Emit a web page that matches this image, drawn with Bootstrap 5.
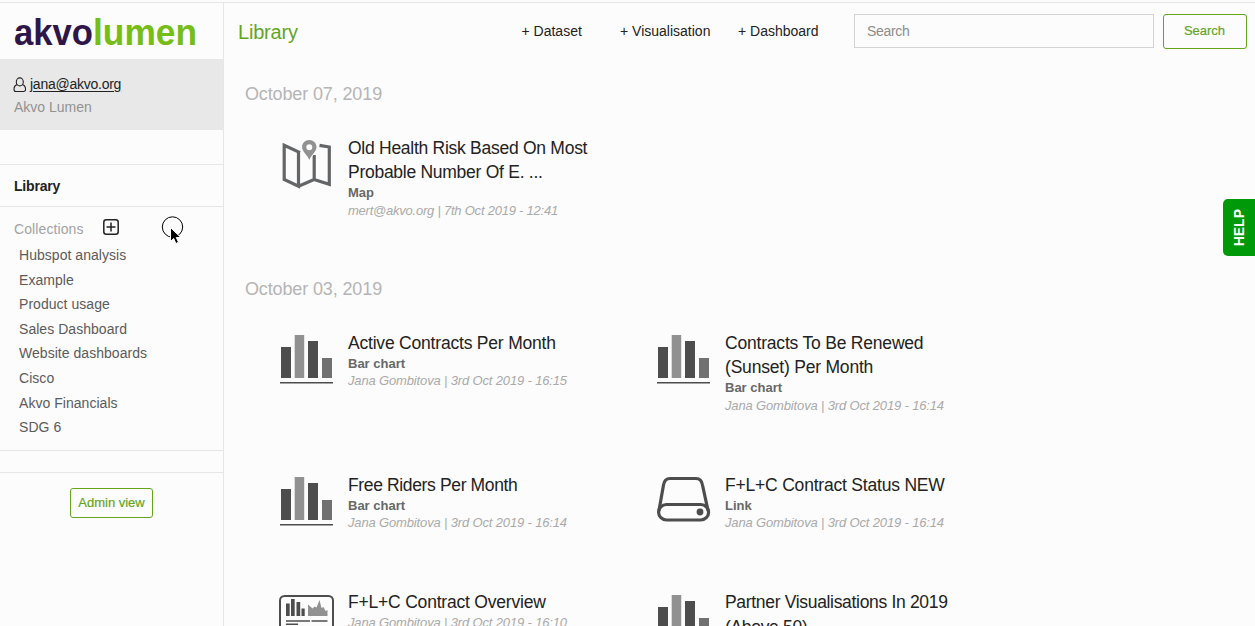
<!DOCTYPE html>
<html lang="en">
<head>
<meta charset="utf-8">
<meta name="viewport" content="width=device-width, initial-scale=1">
<title>Akvo Lumen – Library</title>
<link href="https://cdn.jsdelivr.net/npm/bootstrap@5.3.0/dist/css/bootstrap.min.css" rel="stylesheet">
<style>
:root{--line:#e6e6e6;--green:#64a51e}
body{font-family:"Liberation Sans",Arial,sans-serif;font-size:14px;line-height:20px;background:#fcfcfc;color:#222;height:624px;overflow:hidden;border-top:1px solid var(--line);margin-top:2px}
.app{height:623px;overflow:hidden}
.side{width:224px;border-right:1px solid var(--line)}
.brand{height:56px;padding:0 0 0 14px}
.profile{height:71px;background:#e8e8e8;padding:14px 14px 0;line-height:23px}
.profile a{color:#222;text-underline-offset:2px;letter-spacing:-.25px}
.muted{color:#929292}
.lib{margin-top:34px;height:43px;border-top:1px solid var(--line);border-bottom:1px solid var(--line);padding:1px 14px 0;font-weight:700}
.collections{height:244px;border-bottom:1px solid var(--line);padding:7px 14px 0}
.collections .head{height:29px;color:#a3a3a3;padding-bottom:3px;letter-spacing:.1px}
.collections .head span{width:89px;padding-top:3px}
.collections li{height:24.6px;line-height:24.6px;padding-left:5px;color:#5b5b5b;white-space:nowrap;letter-spacing:.04px}
.admin{margin-top:21px;border-top:1px solid var(--line);padding-top:15px}
.btn-lumen{--bs-btn-color:var(--green);--bs-btn-border-color:var(--green);--bs-btn-border-radius:3px;--bs-btn-font-size:13px;padding:0;-webkit-text-stroke:.2px}
.top-bar{height:56px;padding:0 8px 0 14px}
.page-title{font-size:20px;color:var(--green);margin:0;width:283.500px;letter-spacing:-.2px;line-height:24px;padding-top:1px}
.create{color:#222;text-decoration:none;white-space:nowrap}
.search-box{width:300px;height:34px;border:1px solid #d4d4d4;border-radius:0;background:#fcfcfc;font-size:14px;padding:0 12.500px;letter-spacing:-.3px}
.search-box::placeholder{color:#8c8c8c}
.list{padding:23px 0 0 21px}
.day{font-size:18px;line-height:24px;color:#b5b5b5;margin:0 0 29px;font-weight:400;letter-spacing:-.13px}
.tiles{padding-left:33px;width:787px}
.tile{width:377px;margin-bottom:57.5px}
.tile-icon{width:58px;height:56px;margin-right:12px}
.tile h3{font-size:17.5px;line-height:24.5px;font-weight:400;color:#222;margin:0 0 -.6px;padding-top:.6px;white-space:nowrap;letter-spacing:-.2px}
.tile h3.long{letter-spacing:-.27px}
.kind{font-size:13px;line-height:17.5px;font-weight:700;color:#686868}
.meta{font-size:13px;line-height:18px;font-style:italic;color:#aaa;white-space:nowrap;letter-spacing:-.15px}
.help{right:0;top:196px;width:32px;height:57px;background:#00990a;color:#fff;border-radius:5px 0 0 5px;font-weight:700}
.help span{writing-mode:vertical-rl;transform:rotate(180deg);font-size:14px}
.pointer{left:160px;top:213px}
</style>
</head>
<body class="position-relative">
<svg class="d-none">
  <symbol id="bars" viewBox="0 0 58 56">
    <path fill="#4d4d4d" d="M3 17h10v31H3zM30 11h10v37H30zM2 52h53v1.600H2z"/><path fill="#919191" d="M16.700 5h9.500v43h-9.500z"/><path fill="#717171" d="M44 28h10v20H44z"/>
  </symbol>
  <symbol id="map" viewBox="0 0 58 56">
    <path fill="none" stroke="#636567" stroke-width="3.200" d="M22 17.600 6.200 10.200v34.300L20.500 51.200V17M20.500 51.200l15.700-6.700V20M36 44.500l15.300 4.800V12l-9.800-1.700"/>
    <path fill="#919191" stroke="#fcfcfc" stroke-width="1.500" paint-order="stroke" fill-rule="evenodd" d="M31.300 5c-4 0-7.200 3-7.200 7 0 4.800 5 7.500 7.200 13 2.200-5.500 7.200-8.200 7.200-13 0-4-3.200-7-7.200-7zm0 4.200a3 3 0 1 1 0 6 3 3 0 0 1 0-6z"/>
  </symbol>
  <symbol id="drive" viewBox="0 0 58 56">
    <g fill="none" stroke="#4d4d4d" stroke-width="3.200"><path d="M4 38.500 8.500 13q1-6.500 6.500-6.500h26q5.500 0 6.500 6.500L53 38.500"/><rect x="3.600" y="32.500" width="50" height="15.500" rx="7.750"/></g><circle cx="45" cy="40" r="3.400" fill="#4d4d4d"/>
  </symbol>
  <symbol id="board" viewBox="0 0 58 56">
    <rect x="2" y="6" width="53" height="45" rx="4.500" fill="none" stroke="#4d4d4d" stroke-width="2"/>
    <path fill="#4d4d4d" d="M8 13.500h3.700V26H8zM13 9h3.700v17H13zM18.500 12h3.700v14h-3.700zM23.500 18.500h3.200V26h-3.200zM8 30.200h24v1.500H8zM33.500 30.200h16v1.500h-16zM8 33.500h12V35H8z"/>
    <path fill="#919191" d="M30 26V14.500l4.500 4 2-2 2 1L41.500 10l2 8 2-1 2 4 2-1v6z"/>
  </symbol>
</svg>

<div class="app d-flex">
  <aside class="side flex-shrink-0">
    <div class="brand d-flex align-items-center">
      <svg width="190" height="48" role="img" aria-label="akvolumen"><g font-family="Liberation Sans,Arial,sans-serif" font-size="37.500" font-weight="700"><text x="0" y="37.500" fill="#2f1648" textLength="79" lengthAdjust="spacingAndGlyphs">akvo</text><text x="79" y="37.500" fill="#76bd18" textLength="104" lengthAdjust="spacingAndGlyphs">lumen</text></g></svg>
    </div>
    <div class="profile">
      <div class="d-flex align-items-center"><svg width="13" height="16" class="me-1" style="margin-left:-1px" viewBox="0 0 13 16" fill="none" stroke="#222" stroke-width="1.100"><ellipse cx="6.800" cy="4.900" rx="3.500" ry="4"/><path d="M4.200 7.600C1.600 8.200 1 10 1 12.500q0 2 2 2h7.600q2 0 2-2c0-2.500-.6-4.300-3.200-4.900"/></svg><a href="#">jana@akvo.org</a></div>
      <div class="muted">Akvo Lumen</div>
    </div>
    <div class="lib d-flex align-items-center"><span style="letter-spacing:-.2px">Library</span></div>
    <div class="collections">
      <div class="head d-flex align-items-center"><span>Collections</span><svg width="16" height="16" fill="none" stroke="#222" stroke-width="1.500"><rect x=".8" y=".8" width="14.400" height="14.400" rx="2.500"/><path d="M8 3.500v9M3.500 8h9"/></svg></div>
      <ul class="list-unstyled mb-0">
        <li>Hubspot analysis</li><li>Example</li><li>Product usage</li><li>Sales Dashboard</li><li>Website dashboards</li><li>Cisco</li><li>Akvo Financials</li><li>SDG 6</li>
      </ul>
    </div>
    <div class="admin d-flex justify-content-center"><button class="btn btn-lumen" style="width:83px;height:30px">Admin view</button></div>
  </aside>

  <main class="flex-grow-1">
    <header class="top-bar d-flex align-items-center">
      <h1 class="page-title">Library</h1>
      <nav class="d-flex"><a class="create" style="width:98.500px" href="#">+ Dataset</a><a class="create" style="width:118px" href="#">+ Visualisation</a><a class="create" style="width:115.500px" href="#">+ Dashboard</a></nav>
      <form class="d-flex align-items-center gap-2"><input class="form-control search-box" placeholder="Search" aria-label="Search"><button type="button" class="btn btn-lumen" style="width:84px;height:35px;margin-left:1px">Search</button></form>
    </header>
    <div class="list">
      <h2 class="day">October 07, 2019</h2>
      <div class="tiles d-flex flex-wrap">
        <article class="tile d-flex"><svg class="tile-icon"><use href="#map"/></svg><div><h3 class="long">Old Health Risk Based On Most<br>Probable Number Of E. ...</h3><div class="kind">Map</div><div class="meta" style="letter-spacing:-.23px">mert@akvo.org | 7th Oct 2019 - 12:41</div></div></article>
      </div>
      <h2 class="day">October 03, 2019</h2>
      <div class="tiles d-flex flex-wrap">
        <article class="tile d-flex"><svg class="tile-icon"><use href="#bars"/></svg><div><h3>Active Contracts Per Month</h3><div class="kind">Bar chart</div><div class="meta">Jana Gombitova | 3rd Oct 2019 - 16:15</div></div></article>
        <article class="tile d-flex"><svg class="tile-icon"><use href="#bars"/></svg><div><h3>Contracts To Be Renewed<br>(Sunset) Per Month</h3><div class="kind">Bar chart</div><div class="meta">Jana Gombitova | 3rd Oct 2019 - 16:14</div></div></article>
        <article class="tile d-flex"><svg class="tile-icon"><use href="#bars"/></svg><div><h3 style="letter-spacing:-.36px">Free Riders Per Month</h3><div class="kind">Bar chart</div><div class="meta">Jana Gombitova | 3rd Oct 2019 - 16:14</div></div></article>
        <article class="tile d-flex"><svg class="tile-icon"><use href="#drive"/></svg><div><h3>F+L+C Contract Status NEW</h3><div class="kind">Link</div><div class="meta">Jana Gombitova | 3rd Oct 2019 - 16:14</div></div></article>
        <article class="tile d-flex"><svg class="tile-icon"><use href="#board"/></svg><div><h3>F+L+C Contract Overview</h3><div class="meta">Jana Gombitova | 3rd Oct 2019 - 16:10</div></div></article>
        <article class="tile d-flex"><svg class="tile-icon"><use href="#bars"/></svg><div><h3 style="letter-spacing:-.32px">Partner Visualisations In 2019<br>(Above 50)</h3></div></article>
      </div>
    </div>
  </main>
</div>
<a class="help position-absolute d-flex align-items-center justify-content-center text-decoration-none" href="#"><span>HELP</span></a>
<svg class="pointer position-absolute" width="26" height="32"><circle cx="12.500" cy="11" r="10.200" fill="none" stroke="#000"/><path d="M10.500 11.500v14l3.200-3 2.200 5 2.600-1.200-2.200-4.800h4.500z" stroke="#fff" stroke-width="1"/></svg>
<script src="https://cdn.jsdelivr.net/npm/bootstrap@5.3.0/dist/js/bootstrap.bundle.min.js"></script>
</body>
</html>
